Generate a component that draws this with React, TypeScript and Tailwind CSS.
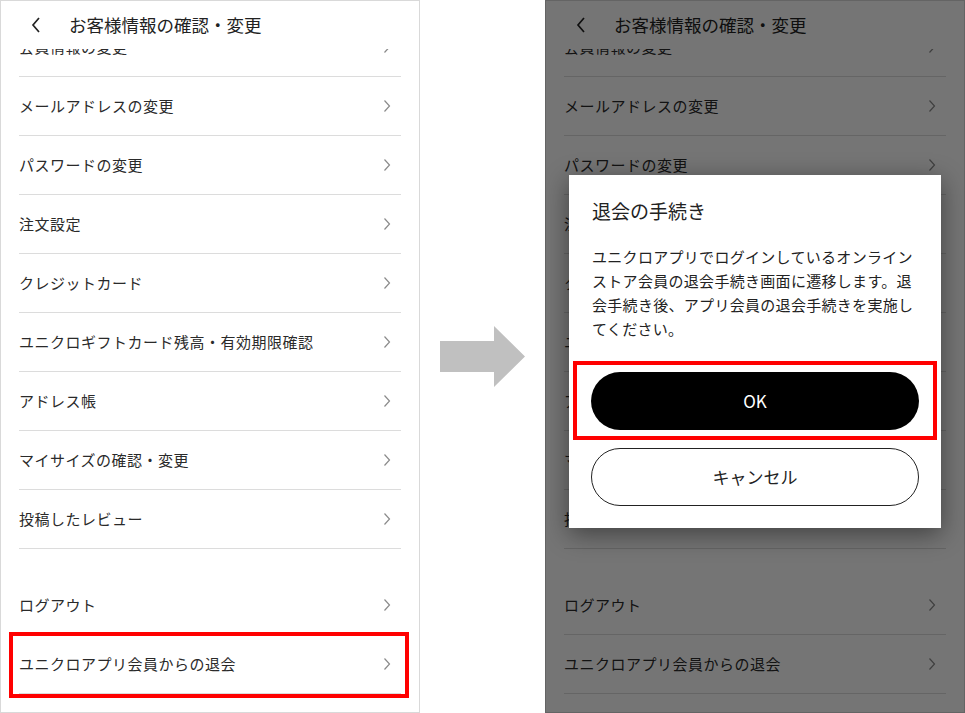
import React from "react";

const items = [
  "会員情報の変更",
  "メールアドレスの変更",
  "パスワードの変更",
  "注文設定",
  "クレジットカード",
  "ユニクロギフトカード残高・有効期限確認",
  "アドレス帳",
  "マイサイズの確認・変更",
  "投稿したレビュー",
];

function Chevron() {
  return (
    <svg width="8" height="14" viewBox="0 0 8 14" className="shrink-0">
      <polyline points="1.5,1.5 6.5,7 1.5,12.5" fill="none" stroke="#8a8a8a" strokeWidth="1.2" />
    </svg>
  );
}

function Row({ label, highlight }: { label: string; highlight?: boolean }) {
  return (
    <div className="relative h-[59px] flex items-center justify-between border-b border-[#dcdcdc] pr-[10px]">
      <span className="text-[15px] tracking-[0.5px] text-[#2a2a2a]">{label}</span>
      <Chevron />
      {highlight && (
        <div className="absolute left-[-10px] right-[-8px] top-[-3px] bottom-[-5px] border-[4px] border-[#ff0000]" />
      )}
    </div>
  );
}

function Screen({ highlightLast }: { highlightLast?: boolean }) {
  return (
    <div className="relative w-[420px] h-[713px] bg-white border border-[#d9d9d9] overflow-hidden flex flex-col">
      <div className="relative z-10 h-[48px] bg-white flex items-center">
        <svg width="12" height="18" viewBox="0 0 12 18" className="ml-[29px]">
          <polyline points="9,2 3,9 9,16" fill="none" stroke="#222" strokeWidth="1.7" />
        </svg>
        <span className="ml-[27px] text-[17.5px] text-[#222] leading-none">お客様情報の確認・変更</span>
      </div>
      <div className="-mt-[31px] pl-[18px] pr-[18px]">
        {items.map((t) => (
          <Row key={t} label={t} />
        ))}
        <div className="h-[27px]" />
        <Row label="ログアウト" />
        <Row label="ユニクロアプリ会員からの退会" highlight={highlightLast} />
      </div>
    </div>
  );
}

function Arrow() {
  return (
    <svg width="85" height="62" viewBox="0 0 85 62" className="mx-[20px]">
      <polygon points="0,15 54,15 54,0 85,30.5 54,61 54,46 0,46" fill="#c0c0c0" />
    </svg>
  );
}

export default function App() {
  return (
    <div
      className="w-[965px] h-[713px] bg-white flex items-center"
      style={{ fontFamily: '"Noto Sans CJK JP", "Noto Sans", sans-serif' }}
    >
      <Screen highlightLast />
      <Arrow />
      <div className="relative">
        <Screen />
        <div className="absolute inset-0 z-20 bg-black/[0.54]" />
        <div className="absolute z-30 left-[24px] top-[175px] w-[372px] bg-white shadow-[0_6px_24px_rgba(0,0,0,0.45)] pt-[24px] pb-[22px]">
          <div className="px-[23px] text-[19px] leading-[24px] text-[#222]">退会の手続き</div>
          <div className="mt-[22px] px-[23px] text-[15px] leading-[24px] tracking-[0.3px] text-[#222]">
            ユニクロアプリでログインしているオンライン
            <br />
            ストア会員の退会手続き画面に遷移します。退
            <br />
            会手続き後、アプリ会員の退会手続きを実施し
            <br />
            てください。
          </div>
          <div className="mt-[20px] mx-[4px] border-[4px] border-[#ff0000] pt-[7px] pb-[6px] px-[14px]">
            <div className="h-[58px] rounded-full bg-black flex items-center justify-center text-white text-[17px]">
              OK
            </div>
          </div>
          <div className="mt-[8px] mx-[22px] h-[58px] rounded-full border border-[#222] flex items-center justify-center text-[17px] text-[#222]">
            キャンセル
          </div>
        </div>
      </div>
    </div>
  );
}
